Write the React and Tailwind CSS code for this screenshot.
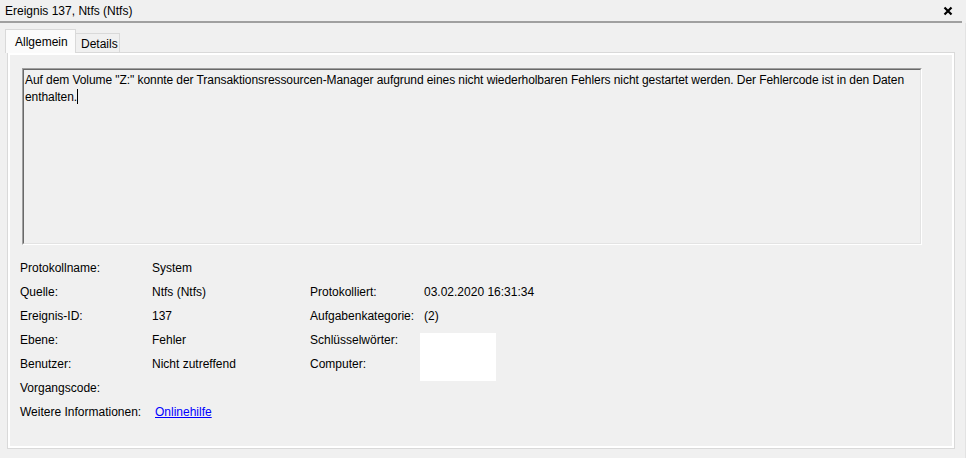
const rows = [
  ['Protokollname:', 'System', '', ''],
  ['Quelle:', 'Ntfs (Ntfs)', 'Protokolliert:', '03.02.2020 16:31:34'],
  ['Ereignis-ID:', '137', 'Aufgabenkategorie:', '(2)'],
  ['Ebene:', 'Fehler', 'Schlüsselwörter:', ''],
  ['Benutzer:', 'Nicht zutreffend', 'Computer:', ''],
  ['Vorgangscode:', '', '', ''],
];

function CloseIcon() {
  return (
    <svg width="10" height="10" viewBox="0 0 10 10" className="block">
      <path d="M1.5 1.5 L8.5 8.5 M8.5 1.5 L1.5 8.5" stroke="#000" strokeWidth="2.2" />
    </svg>
  );
}

export default function App() {
  return (
    <div className="w-[966px] h-[458px] bg-[#f0f0f0] text-black text-[12px] leading-[16px] font-['Segoe_UI','Liberation_Sans',sans-serif] overflow-hidden">
      {/* title bar */}
      <div className="h-[21px] flex items-center justify-between pl-[5px] pr-[13px]">
        <span>Ereignis 137, Ntfs (Ntfs)</span>
        <CloseIcon />
      </div>
      <div className="h-[2px] w-[962px] bg-[#a0a0a0]" />

      <div className="w-[966px] h-[435px] border-r border-[#e3e3e3] pt-[6px]">
        {/* tabs */}
        <div className="flex items-end pl-[5px] h-[23px]">
          <div className="h-[24px] w-[71px] -mb-px relative z-10 bg-[#fbfbfb] border border-b-0 border-[#d9d9d9] flex items-center pl-[9px]">
            Allgemein
          </div>
          <div className="h-[19px] w-[44px] border border-l-0 border-b-0 border-[#d9d9d9] flex items-center pl-[5px] pt-[2px]">
            Details
          </div>
        </div>

        {/* tab page */}
        <div className="ml-[7px] w-[948px] h-[397px] border border-[#d9d9d9]">
          <div className="h-full border-2 border-white pl-[12px] pt-[13px]">
            {/* description box */}
            <div className="w-[900px] h-[177px] border-t border-l border-t-[#a0a0a0] border-l-[#a0a0a0] border-b border-r border-b-white border-r-white">
              <div className="h-full border-t border-l border-t-[#696969] border-l-[#696969] border-b border-r border-b-[#e3e3e3] border-r-[#e3e3e3] pl-[1px] pt-[2px] leading-[17px] tracking-[-0.07px] whitespace-nowrap">
                Auf dem Volume "Z:" konnte der Transaktionsressourcen-Manager aufgrund eines nicht wiederholbaren Fehlers nicht gestartet werden. Der Fehlercode ist in den Daten
                <br />
                enthalten.<span className="inline-block w-px h-[15px] bg-black align-[-3px]" />
              </div>
            </div>

            {/* properties */}
            <div className="mt-[11px] -ml-[2px] grid grid-cols-[132px_158px_114px_1fr] auto-rows-[24px] items-center">
              {rows.map((r, i) => (
                <Row key={i} r={r} i={i} />
              ))}
              <div>Weitere Informationen:</div>
              <div className="col-span-3">
                <a href="#" className="ml-[3px] text-[#0000ff] underline">Onlinehilfe</a>
              </div>
            </div>
          </div>
        </div>
      </div>
    </div>
  );
}

function Row({ r, i }) {
  return (
    <>
      <div>{r[0]}</div>
      <div>{r[1]}</div>
      <div>{r[2]}</div>
      <div className="relative h-full flex items-center">
        {r[3]}
        {i === 3 && (
          <div className="absolute left-[-4px] top-[5px] w-[76px] h-[48px] bg-white" />
        )}
      </div>
    </>
  );
}
